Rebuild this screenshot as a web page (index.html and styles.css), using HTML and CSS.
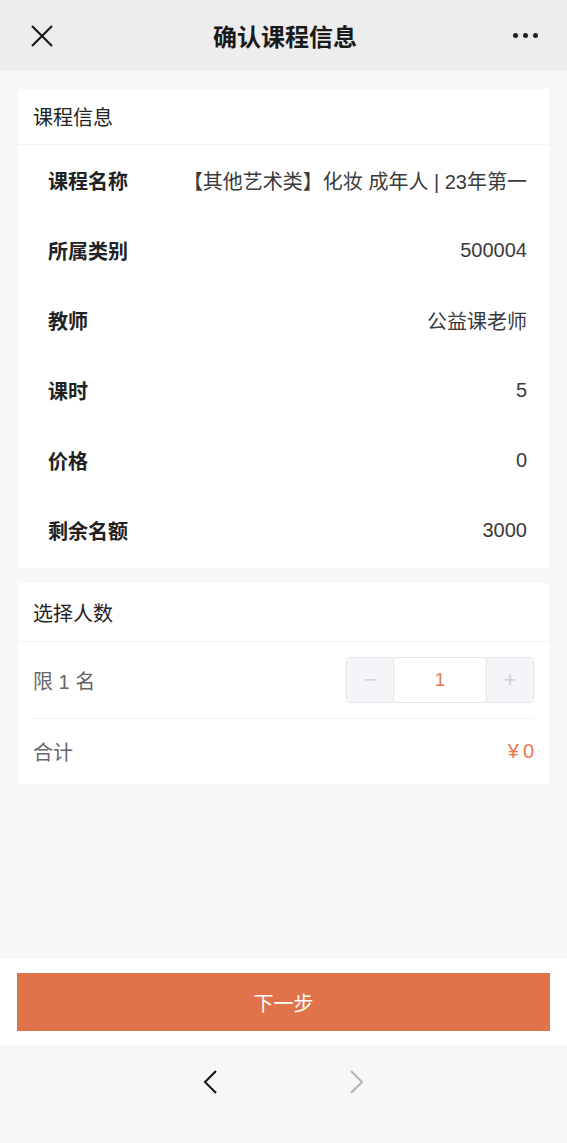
FILE: index.html
```html
<!DOCTYPE html>
<html lang="zh-CN">
<head>
    <meta charset="UTF-8">
    <meta name="viewport" content="width=device-width, initial-scale=1.0">
    <title>确认课程信息</title>
    <link rel="stylesheet" href="styles.css">
</head>
<body>
    <div class="page">
        <div class="topbar">
            <span class="close">
                <svg width="22" height="22" viewBox="0 0 22 22"><path d="M1 1L21 21M21 1L1 21" stroke="#1a1a1a" stroke-width="2.2" fill="none"/></svg>
            </span>
            <h1>确认课程信息</h1>
            <span class="more"><i></i><i></i><i></i></span>
        </div>

        <div class="content">
            <div class="card">
                <div class="card-title">课程信息</div>
                <div class="info-row"><span class="label">课程名称</span><span class="value">【其他艺术类】化妆 成年人 | 23年第一</span></div>
                <div class="info-row"><span class="label">所属类别</span><span class="value">500004</span></div>
                <div class="info-row"><span class="label">教师</span><span class="value">公益课老师</span></div>
                <div class="info-row"><span class="label">课时</span><span class="value">5</span></div>
                <div class="info-row"><span class="label">价格</span><span class="value">0</span></div>
                <div class="info-row"><span class="label">剩余名额</span><span class="value">3000</span></div>
            </div>

            <div class="card card-count">
                <div class="card-title">选择人数</div>
                <div class="count-row">
                    <span class="muted">限 1 名</span>
                    <div class="stepper">
                        <span class="step-btn">&minus;</span>
                        <span class="step-num">1</span>
                        <span class="step-btn">+</span>
                    </div>
                </div>
                <div class="count-row total">
                    <span class="muted">合计</span>
                    <span class="price">¥&thinsp;0</span>
                </div>
            </div>
        </div>

        <div class="footer">
            <button type="button" class="next">下一步</button>
        </div>

        <div class="navbar">
            <svg width="16" height="26" viewBox="0 0 16 26"><path d="M14 2L3 13L14 24" stroke="#111" stroke-width="2" fill="none"/></svg>
            <svg width="16" height="26" viewBox="0 0 16 26"><path d="M2 2L13 13L2 24" stroke="#b3b3b3" stroke-width="2" fill="none"/></svg>
        </div>
    </div>
</body>
</html>
```

FILE: styles.css
```css
* {
    box-sizing: border-box;
}
body {
    margin: 0;
    font-family: "Liberation Sans", "Noto Sans CJK SC", sans-serif;
    background-color: #f7f7f7;
    color: #333;
}
.page {
    height: 1143px;
    display: flex;
    flex-direction: column;
}
.topbar {
    height: 71px;
    background-color: #ededed;
    display: flex;
    align-items: center;
    justify-content: space-between;
    padding: 0 29px 0 31px;
}
.topbar h1 {
    margin: 0;
    font-size: 24px;
    font-weight: bold;
    color: #1a1a1a;
    padding-left: 4px;
}
.close {
    display: flex;
    width: 22px;
}
.more {
    display: flex;
    gap: 5px;
}
.more i {
    width: 5px;
    height: 5px;
    border-radius: 50%;
    background-color: #222;
}
.content {
    flex: 1;
    padding: 18px 18px 0;
}
.card {
    background-color: #fff;
    margin-bottom: 15px;
}
.card-title {
    height: 56px;
    display: flex;
    align-items: center;
    padding-left: 15px;
    font-size: 20px;
    color: #222;
    border-bottom: 1px solid #f4f4f4;
}
.info-row {
    height: 70px;
    display: flex;
    align-items: center;
    justify-content: space-between;
    padding: 0 22px 0 30px;
    font-size: 20px;
}
.info-row:last-child {
    height: 73px;
    padding-bottom: 3px;
}
.label {
    font-weight: bold;
    color: #222;
}
.value {
    color: #3a3a3a;
}
.card-count .card-title {
    height: 59px;
}
.count-row {
    display: flex;
    align-items: center;
    justify-content: space-between;
    margin: 0 15px;
    height: 77px;
    font-size: 20px;
    border-bottom: 1px solid #f2f2f2;
}
.count-row.total {
    height: 65px;
    border-bottom: none;
}
.muted {
    color: #666;
}
.stepper {
    display: flex;
    height: 46px;
    border: 1px solid #e4e6ea;
    border-radius: 4px;
    overflow: hidden;
}
.step-btn {
    width: 46px;
    background-color: #f4f5f8;
    color: #cdd0d5;
    display: flex;
    align-items: center;
    justify-content: center;
    font-size: 22px;
    font-weight: 300;
}
.step-num {
    width: 94px;
    border-left: 1px solid #e4e6ea;
    border-right: 1px solid #e4e6ea;
    display: flex;
    align-items: center;
    justify-content: center;
    color: #e47a52;
    font-size: 19px;
}
.price {
    color: #e8774f;
}
.footer {
    background-color: #fff;
    padding: 14px 17px;
}
.next {
    display: block;
    width: 100%;
    height: 58px;
    border: none;
    background-color: #e0734a;
    color: #fff;
    font-family: inherit;
    font-size: 20px;
}
.navbar {
    height: 98px;
    display: flex;
    justify-content: center;
    gap: 131px;
    padding-top: 24px;
}
```
